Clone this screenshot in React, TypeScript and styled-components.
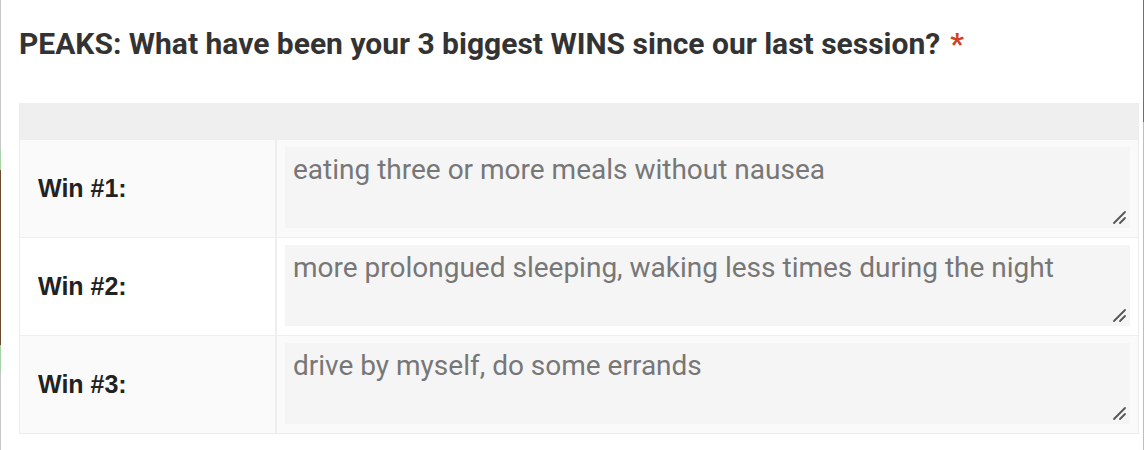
import React from 'react'
import styled, {createGlobalStyle} from 'styled-components'

const GlobalStyle=createGlobalStyle`
html,body{
    margin:0;
    padding:0;
    background:#ffffff;
}
body{
    width:1144px;
    height:450px;
    overflow:hidden;
}
`

interface IWin{
    label:string;
    answer:string;
}

const wins:IWin[]=[
    {label:'Win #1:',answer:'eating three or more meals without nausea'},
    {label:'Win #2:',answer:'more prolongued sleeping, waking less times during the night'},
    {label:'Win #3:',answer:'drive by myself, do some errands'},
]

const ResizeGrip:React.FC=():React.ReactElement=>(
    <Grip width="16" height="16" viewBox="0 0 16 16">
        <path d="M3 14 L14 3 M9 14 L14 9" stroke="#555" strokeWidth="1.8" strokeLinecap="round" fill="none"/>
    </Grip>
)

export default function App():React.ReactElement{
    return (
        <Page>
            <GlobalStyle/>
            <LeftEdge>
                <EdgeStripe/>
            </LeftEdge>
            <Content>
                <Question>
                    PEAKS: What have been your 3 biggest WINS since our last session?
                    <Required>*</Required>
                </Question>
                <Grid>
                    <HeaderRow/>
                    {wins.map((win,i)=>(
                        <Row key={win.label} shaded={i%2===0}>
                            <LabelCell>{win.label}</LabelCell>
                            <AnswerCell>
                                <Answer>
                                    {win.answer}
                                    <ResizeGrip/>
                                </Answer>
                            </AnswerCell>
                        </Row>
                    ))}
                </Grid>
            </Content>
            <RightEdge/>
        </Page>
    )
}

const Page=styled.div`
display:flex;
flex-direction:row;
width:1144px;
height:450px;
`

const LeftEdge=styled.div`
width:2px;
background:#c8c8c8;
display:flex;
flex-direction:column;
padding-top:150px;
box-sizing:border-box;
`

const EdgeStripe=styled.div`
height:222px;
background:linear-gradient(to bottom,#a6d4a6 0,#a6d4a6 9%,#6b4a32 9%,#6b4a32 88%,#a6d4a6 88%);
`

const RightEdge=styled.div`
width:2px;
background:linear-gradient(to bottom,#6f6f6f 0,#6f6f6f 122px,#bdbdbd 122px);
`

const Content=styled.div`
flex:1;
padding:16px 4px 0 18px;
`

const Question=styled.div`
font-family:Roboto,"Liberation Sans",sans-serif;
font-weight:700;
font-size:30px;
line-height:56px;
color:#333333;
margin-bottom:31px;
white-space:nowrap;
`

const Required=styled.span`
color:#d2401e;
margin-left:10px;
`

const Grid=styled.div`
width:1118px;
border:1px solid #ececec;
border-top:none;
`

const HeaderRow=styled.div`
height:36px;
background:#efefef;
`

interface IRowProps{
    shaded:boolean;
}

const Row=styled.div<IRowProps>`
display:grid;
grid-template-columns:257px 1fr;
height:97px;
border-top:1px solid #eeeeee;
background:${({shaded}):string=>shaded?'#fafafa':'#ffffff'};
`

const LabelCell=styled.div`
display:flex;
align-items:center;
padding-left:18px;
border-right:2px solid #eeeeee;
font-family:"Liberation Sans",Arial,sans-serif;
font-weight:700;
font-size:25px;
color:#222222;
`

const AnswerCell=styled.div`
padding:7px 8px 8px 8px;
`

const Answer=styled.div`
position:relative;
height:81px;
box-sizing:border-box;
background:#f5f5f5;
padding:6px 8px;
font-family:Roboto,"Liberation Sans",sans-serif;
font-size:28px;
line-height:34px;
color:#777777;
`

const Grip=styled.svg`
position:absolute;
right:3px;
bottom:3px;
`
